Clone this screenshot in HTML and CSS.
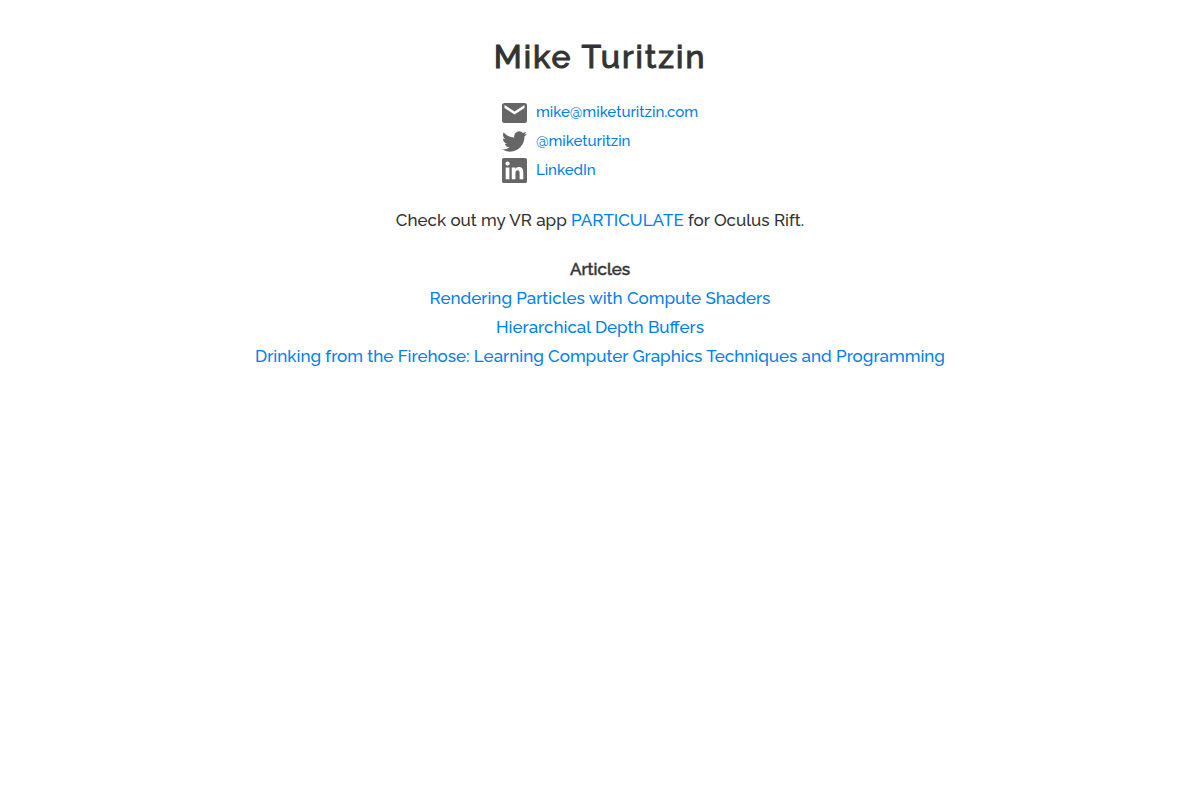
FILE: index.html
```html
<!DOCTYPE html>
<html lang="en">
<head>
  <meta charset="UTF-8">
  <title>Mike Turitzin</title>
  <meta name="viewport" content="width=device-width, initial-scale=1">
  <link rel="stylesheet" href="styles.css">
</head>
<body>

<h1>Mike Turitzin</h1>

<ul class="contact">
  <li>
    <svg class="icon" viewBox="0 0 25 25" aria-hidden="true"><path fill-rule="evenodd" d="M2.5 3h20A2.5 2.5 0 0 1 25 5.500v15a2.5 2.5 0 0 1-2.500 2.500h-20A2.500 2.500 0 0 1 0 20.500v-15A2.500 2.500 0 0 1 2.500 3zM22.500 5l-10 6.500L2.500 5v3l10 6.500 10-6.500z"/></svg>
    <a href="mailto:mike@miketuritzin.com">mike@miketuritzin.com</a>
  </li>
  <li>
    <svg class="icon" viewBox="0 0 24 24" aria-hidden="true"><path d="M23.954 4.569a10 10 0 0 1-2.825.775 4.958 4.958 0 0 0 2.163-2.723c-.951.555-2.005.959-3.127 1.184a4.92 4.92 0 0 0-8.384 4.482C7.691 8.094 4.066 6.13 1.64 3.161a4.822 4.822 0 0 0-.666 2.475c0 1.71.87 3.213 2.188 4.096a4.904 4.904 0 0 1-2.228-.616v.061a4.923 4.923 0 0 0 3.946 4.827 4.996 4.996 0 0 1-2.212.085 4.937 4.937 0 0 0 4.604 3.417 9.868 9.868 0 0 1-6.102 2.105c-.39 0-.779-.023-1.17-.067a13.995 13.995 0 0 0 7.557 2.209c9.054 0 13.999-7.496 13.999-13.986 0-.209 0-.42-.015-.63a9.936 9.936 0 0 0 2.46-2.548z"/></svg>
    <a href="https://twitter.com/miketuritzin">@miketuritzin</a>
  </li>
  <li>
    <svg class="icon" viewBox="0 0 24 24" aria-hidden="true"><path d="M20.447 20.452h-3.554v-5.569c0-1.328-.027-3.037-1.852-3.037-1.853 0-2.136 1.445-2.136 2.939v5.667H9.351V9h3.414v1.561h.046c.477-.9 1.637-1.85 3.37-1.85 3.601 0 4.267 2.37 4.267 5.455v6.286zM5.337 7.433a2.062 2.062 0 1 1 0-4.125 2.062 2.062 0 0 1 0 4.125zM7.119 20.452H3.555V9h3.564v11.452zM22.225 0H1.771C.792 0 0 .774 0 1.729v20.542C0 23.227.792 24 1.771 24h20.451C23.2 24 24 23.227 24 22.271V1.729C24 .774 23.2 0 22.222 0h.003z"/></svg>
    <a href="https://www.linkedin.com/in/miketuritzin">LinkedIn</a>
  </li>
</ul>

<p>Check out my VR app <a href="#">PARTICULATE</a> for Oculus Rift.</p>

<h2>Articles</h2>
<ul class="articles">
  <li><a href="#">Rendering Particles with Compute Shaders</a></li>
  <li><a href="#">Hierarchical Depth Buffers</a></li>
  <li><a href="#">Drinking from the Firehose: Learning Computer Graphics Techniques and Programming</a></li>
</ul>

</body>
</html>
```
FILE: styles.css
```css
body {
  margin: 0;
  padding: 32px 20px;
  font-family: Raleway, Lato, sans-serif;
  font-size: 17px;
  font-weight: 500;
  line-height: 29px;
  color: #333;
  text-align: center;
}

h1, h2 {
  margin: 0;
  font-weight: 500;
  -webkit-text-stroke: 1px rgba(51, 51, 51, 0.5);
}

h1 {
  margin-bottom: 16px;
  font-size: 32px;
  line-height: 50px;
  letter-spacing: 2px;
  -webkit-text-stroke-color: #333;
}

h2 {
  font-size: 17px;
}

p {
  margin: 20px 0;
}

ul {
  margin: 0;
  padding: 0;
  list-style: none;
}

a {
  color: #0080ee;
  text-decoration: none;
}

a:hover {
  text-decoration: underline;
}

.contact {
  width: max-content;
  margin: 0 auto 21px;
  font-size: 15px;
  text-align: left;
}

.contact li {
  display: flex;
  align-items: center;
  gap: 9px;
}

.icon {
  width: 25px;
  height: 25px;
  fill: #666;
}
```
